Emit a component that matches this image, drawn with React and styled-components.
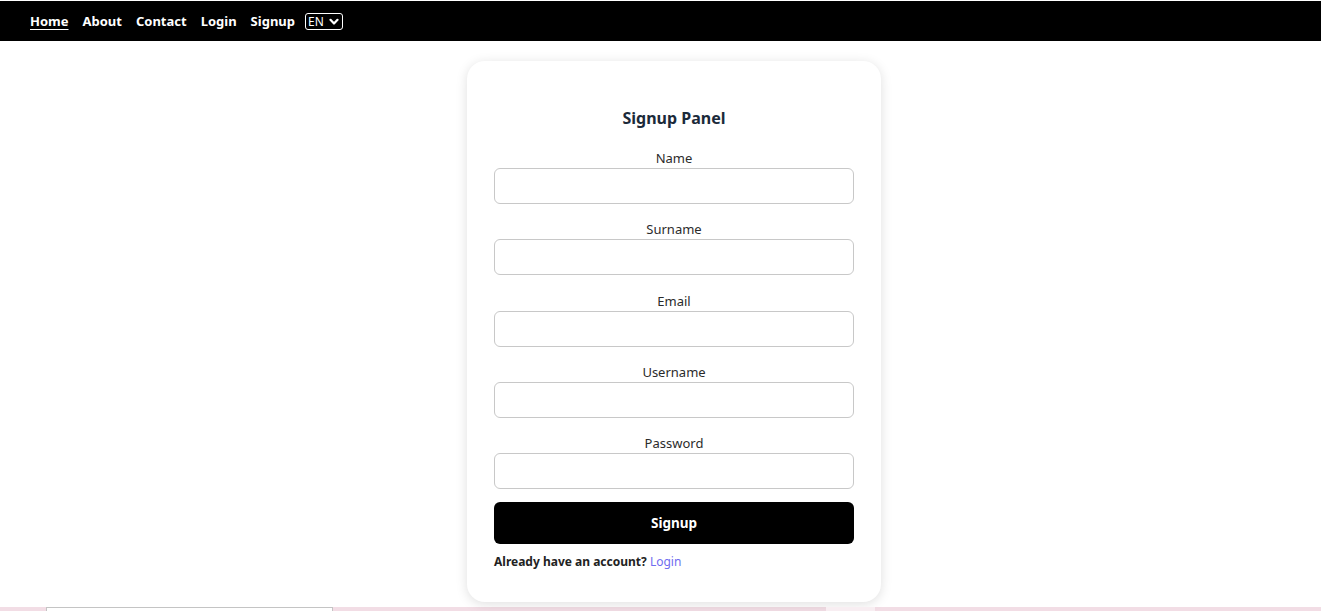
import React from 'react'
import styled, { createGlobalStyle } from 'styled-components'

const GlobalStyle = createGlobalStyle`
  body {
    margin: 0;
    background: #ffffff;
    font-family: "Noto Sans", "Open Sans", sans-serif;
  }
  * { box-sizing: border-box; }
`

const Page = styled.div`
  padding-top: 1px;
  background: #ffffff;
`

const Navbar = styled.nav`
  height: 40px;
  background: #000000;
  display: flex;
  align-items: center;
  gap: 14px;
  padding-left: 30px;
`

const NavLink = styled.a`
  color: #ffffff;
  font-size: 13px;
  font-weight: 700;
  text-decoration: ${p => (p.$active ? 'underline' : 'none')};
  text-underline-offset: 3px;
  cursor: pointer;
`

const LangWrap = styled.div`
  position: relative;
  display: flex;
  align-items: center;
  margin-left: -4px;
`

const LangSelect = styled.select`
  appearance: none;
  background: #000000;
  color: #ffffff;
  border: 1.5px solid #ffffff;
  border-radius: 3px;
  font-family: "Noto Sans", sans-serif;
  font-size: 12px;
  line-height: 13px;
  height: 17px;
  width: 38px;
  padding: 0 0 0 2px;
  outline: none;
`

const Chevron = styled.svg`
  position: absolute;
  right: 4px;
  top: 5px;
  pointer-events: none;
`

const Main = styled.main`
  display: flex;
  justify-content: center;
  padding: 20px 0 5px 27px;
`

const Card = styled.form`
  width: 414px;
  background: #ffffff;
  border-radius: 18px;
  box-shadow: 0 2px 12px rgba(0, 0, 0, 0.13);
  padding: 47px 27px 32px;
  display: flex;
  flex-direction: column;
`

const Title = styled.h2`
  margin: 0 0 22px;
  text-align: center;
  font-size: 16px;
  line-height: 20px;
  font-weight: 700;
  color: #1b2a3a;
`

const Field = styled.div`
  display: flex;
  flex-direction: column;
  margin-bottom: ${p => (p.$last ? '13px' : '17.25px')};
`

const Label = styled.label`
  text-align: center;
  font-size: 13px;
  line-height: 17px;
  color: #2b2b2b;
  margin-bottom: 1px;
`

const Input = styled.input`
  height: 36px;
  border: 1px solid #c8c8c8;
  border-radius: 6px;
  padding: 0 10px;
  font-size: 14px;
  outline: none;
`

const SubmitButton = styled.button`
  height: 42px;
  border: none;
  border-radius: 6px;
  background: #000000;
  color: #ffffff;
  font-family: "Noto Sans", sans-serif;
  font-size: 13.5px;
  font-weight: 700;
  cursor: pointer;
`

const Footnote = styled.p`
  margin: 10px 0 0;
  font-size: 12px;
  line-height: 16px;
  font-weight: 700;
  color: #222222;
`

const FootLink = styled.a`
  color: #6f6cf0;
  font-weight: 400;
  text-decoration: none;
  cursor: pointer;
`

const BottomSection = styled.section`
  height: 40px;
  background: #f2dde5;
  display: flex;
  padding-left: 46px;
`

const GhostBox = styled.div`
  width: 287px;
  background: #ffffff;
  border-top: 1px solid #c4c4c4;
  border-left: 1px solid #c4c4c4;
  border-right: 1px solid #c4c4c4;
`

const LightPatch = styled.div`
  width: 49px;
  margin-left: 493px;
  background: #f8eef2;
`

const fields = ['Name', 'Surname', 'Email', 'Username', 'Password']

export default function App() {
  return (
    <Page>
      <GlobalStyle />
      <Navbar>
        <NavLink $active>Home</NavLink>
        <NavLink>About</NavLink>
        <NavLink>Contact</NavLink>
        <NavLink>Login</NavLink>
        <NavLink>Signup</NavLink>
        <LangWrap>
          <LangSelect defaultValue="EN">
            <option value="EN">EN</option>
            <option value="TR">TR</option>
          </LangSelect>
          <Chevron width="10" height="8" viewBox="0 0 10 8">
            <path d="M1.5 1.8 L5 5.5 L8.5 1.8" fill="none" stroke="#fff" strokeWidth="2.2" strokeLinecap="round" strokeLinejoin="round" />
          </Chevron>
        </LangWrap>
      </Navbar>
      <Main>
        <Card onSubmit={e => e.preventDefault()}>
          <Title>Signup Panel</Title>
          {fields.map((f, i) => (
            <Field key={f} $last={i === fields.length - 1}>
              <Label>{f}</Label>
              <Input type={f === 'Password' ? 'password' : 'text'} />
            </Field>
          ))}
          <SubmitButton type="submit">Signup</SubmitButton>
          <Footnote>
            Already have an account? <FootLink>Login</FootLink>
          </Footnote>
        </Card>
      </Main>
      <BottomSection>
        <GhostBox />
        <LightPatch />
      </BottomSection>
    </Page>
  )
}
